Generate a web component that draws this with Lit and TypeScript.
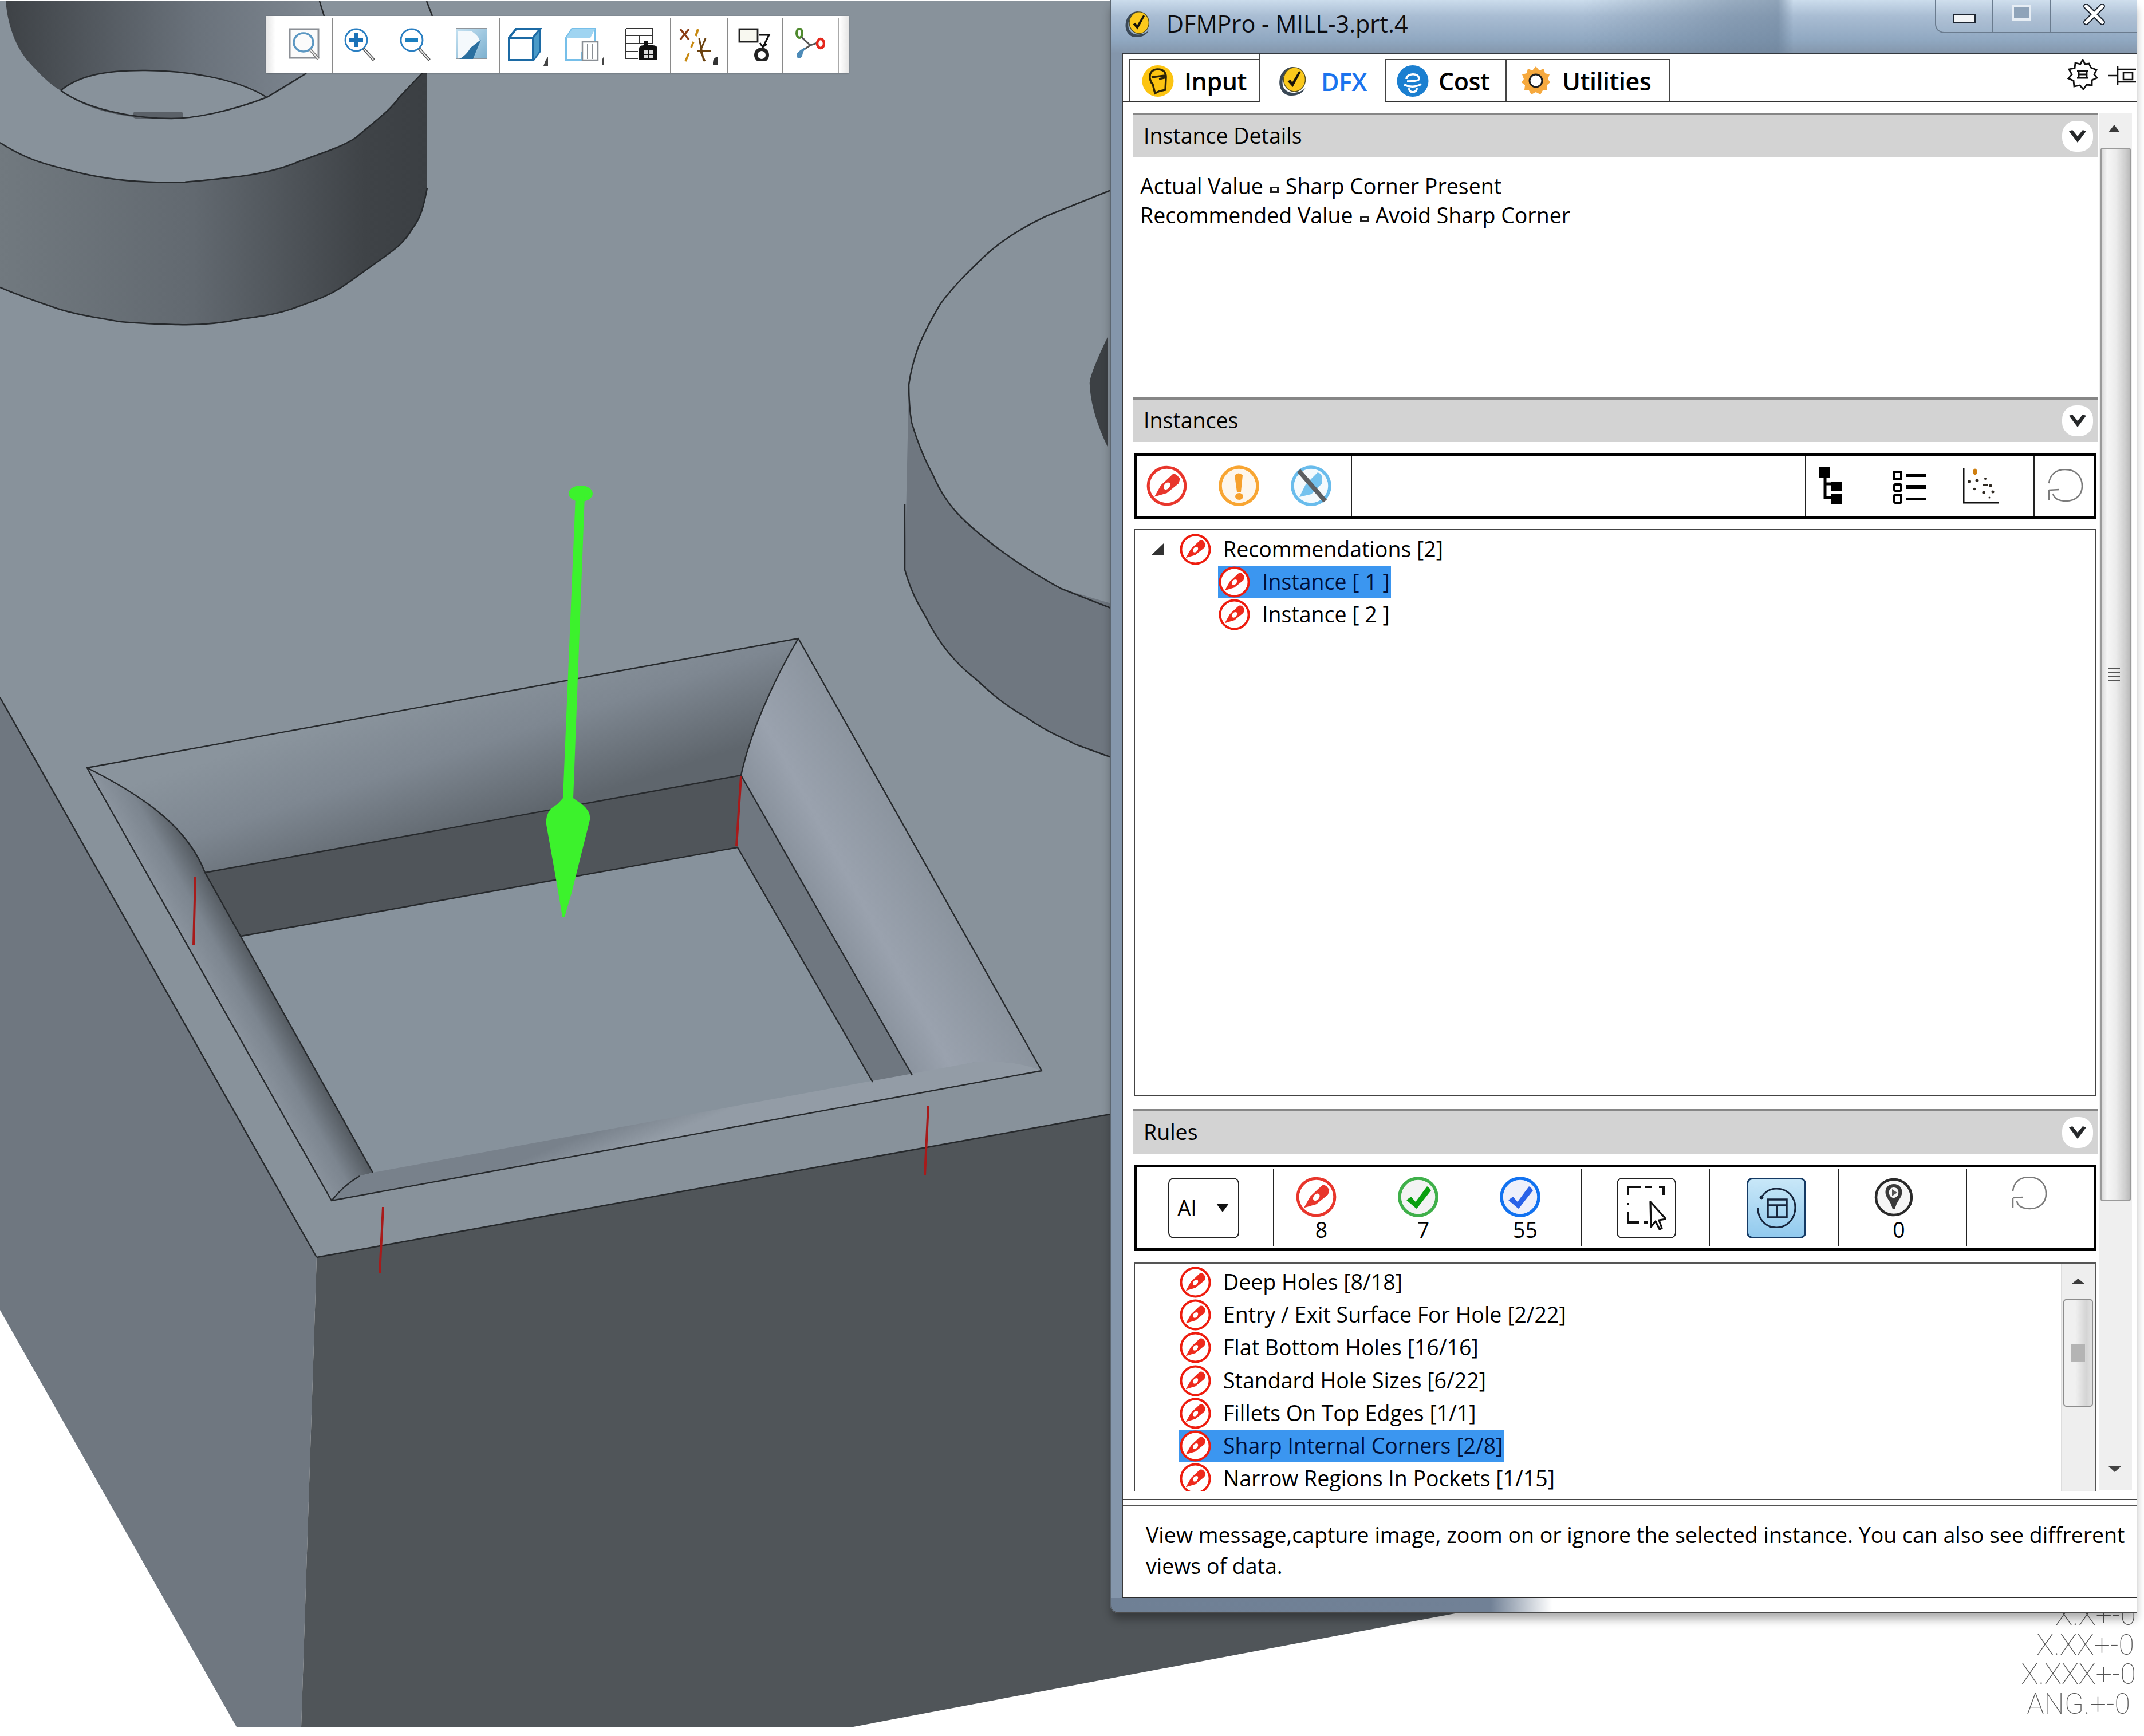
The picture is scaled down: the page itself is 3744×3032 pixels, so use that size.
import { LitElement, html, svg, css } from "lit";
import { customElement } from "lit/decorators.js";

const issue = (w = 57, h = 55) => svg`<svg class="ic" width=${w} height=${h} viewBox="0 0 56 56">
  <circle cx="28" cy="28" r="25.5" fill="#fff" stroke="#ee1c0e" stroke-width="4"/>
  <path fill="#ee2a1c" fill-rule="evenodd" d="M11 43 L20 27 L36 12 Q39 11 42 13 L46 18 Q46 21 44 25 L28 38 Z M24 32 Q27 35 31 31 Q34 27 32 24 Q28 22 25 26 Q23 29 24 32Z"/>
</svg>`;

const ringCheck = (ring: string, fillc: string, chk: string) => svg`<svg class="ic" width="71" height="71" viewBox="0 0 71 71">
  <circle cx="35.5" cy="35.5" r="32.5" fill=${fillc} stroke=${ring} stroke-width="5.5"/>
  <path fill=${chk} d="M15 41 L23 35 L31 44 L51 17 Q56 20 58 24 L33 56 Q31 55 29 53 Z"/>
</svg>`;

const warn = svg`<svg class="ic" width="71" height="71" viewBox="0 0 71 71">
  <circle cx="35.5" cy="35.5" r="32.5" fill="#fdf6ec" stroke="#f8a532" stroke-width="5.5"/>
  <path fill="#f6a02c" d="M28 17 Q35 10 42 17 L39 46 L32 46 Z"/><ellipse cx="36" cy="54" rx="7" ry="6" fill="#f6a02c"/>
</svg>`;

const ignored = svg`<svg class="ic" width="71" height="71" viewBox="0 0 71 71">
  <circle cx="35.5" cy="35.5" r="32.5" fill="#f4fafd" stroke="#69bcec" stroke-width="5.5"/>
  <path fill="#74c2ee" d="M15 55 L26 33 L47 12 Q53 14 55 20 L55 31 L36 50 Z"/>
  <path d="M14 9 L60 62" stroke="#5c5f62" stroke-width="8"/>
</svg>`;

const redBig = svg`<svg class="ic" width="71" height="71" viewBox="0 0 56 56">
  <circle cx="28" cy="28" r="25.5" fill="#fff" stroke="#e8362c" stroke-width="4"/>
  <path fill="#e8362c" fill-rule="evenodd" d="M11 43 L20 27 L36 12 Q39 11 42 13 L46 18 Q46 21 44 25 L28 38 Z M24 32 Q27 35 31 31 Q34 27 32 24 Q28 22 25 26 Q23 29 24 32Z"/>
</svg>`;

const refresh = svg`<svg class="ic" width="60" height="60" viewBox="0 0 60 60" fill="none" stroke="#7b7b7b" stroke-width="2.5">
  <path d="M1 25 C3 8 15 1 29 1 C49 1 59 14 59 30 C59 46 47 56 31 56 C19 56 10 52 8 43"/><path d="M1 37 L19 36 M1 37 L1 54"/>
</svg>`;

const chevron = svg`<svg width="30" height="22" viewBox="0 0 30 22"><path d="M0 2 L6 0 L15 11 L24 0 L30 2 L15 22 Z" fill="#26282a"/></svg>`;

const treeIcon = svg`<svg class="ic" width="39" height="65" viewBox="0 0 39 65">
  <path fill="#000" d="M0 0H18V18H0Z M21 25H39V42H21Z M21 47H39V65H21Z"/><path d="M10 18V53H21 M10 29H21" stroke="#000" stroke-width="5" fill="none"/>
</svg>`;
const listIcon = svg`<svg class="ic" width="58" height="58" viewBox="0 0 58 58">
  <g fill="none" stroke="#000" stroke-width="4"><rect x="2" y="2" width="12" height="12"/><rect x="2" y="24" width="12" height="11" rx="2"/><rect x="2" y="42" width="12" height="14" rx="2"/></g>
  <path fill="#000" d="M22 5H58V11H22Z M23 25H58V32H23Z M22 47H58V52H22Z"/>
</svg>`;
const scatterIcon = svg`<svg class="ic" width="63" height="63" viewBox="0 0 63 63">
  <path d="M1 0V61H63" fill="none" stroke="#111" stroke-width="3"/><ellipse cx="21" cy="7" rx="3.5" ry="5.5" fill="#cf7f10"/>
  <g fill="#2e2820"><circle cx="11" cy="24" r="3"/><circle cx="24" cy="22" r="2.5"/><circle cx="39" cy="19" r="2"/><rect x="35" y="28" width="8" height="4"/><circle cx="48" cy="31" r="2.5"/><circle cx="20" cy="37" r="2.2"/><circle cx="36" cy="43" r="2.6"/><circle cx="52" cy="42" r="2.5"/><circle cx="46" cy="52" r="1.5"/></g>
</svg>`;

const selectBtn = svg`<svg class="ic" width="68" height="78" viewBox="0 0 68 78" fill="none">
  <path d="M24 2H2V16 M2 30V34 M2 46V64H22 M32 2H44 M56 2H64V16 M36 64H30" stroke="#111" stroke-width="4"/><path d="M41 28 L42 72 L50 62 L57 76 L61 74 L56 60 L68 58 Z" fill="#fff" stroke="#111" stroke-width="3.2" stroke-linejoin="round"/>
</svg>`;
const cycleBtn = svg`<svg class="ic" width="68" height="70" viewBox="0 0 68 70" fill="none" stroke="#17253c">
  <path d="M8 16 C16 4 26 1 34 1 C54 1 67 16 67 34 C67 54 52 69 34 69 C14 69 1 52 2 34" stroke-width="3"/><circle cx="8" cy="16" r="3" fill="#17253c"/>
  <rect x="19" y="20" width="33" height="31" stroke-width="3.5"/><path d="M19 30H52 M35 30V51" stroke-width="3.5"/>
</svg>`;
const pinStat = svg`<svg class="ic" width="68" height="70" viewBox="0 0 68 70">
  <circle cx="34" cy="35" r="31" fill="#f6f6f6" stroke="#2a2a2a" stroke-width="4.5"/>
  <path fill="#3a3a3a" fill-rule="evenodd" d="M34 12 C46 12 50 22 48 30 C46 38 39 42 36 56 H32 C29 42 22 38 20 30 C18 22 22 12 34 12Z M34 18 C27 18 25 24 26 29 C27 34 31 36 34 36 C37 36 41 34 42 29 C43 24 41 18 34 18Z"/>
  <path fill="#555" d="M31 21 L40 27 L31 33Z"/>
</svg>`;

const titleLogo = (w: number, h: number) => svg`<svg class="ic" width=${w} height=${h} viewBox="0 0 50 52">
  <path d="M24 51 C8 52 0 38 2 24 C4 8 16 0 28 1 C16 5 7 14 7 28 C7 40 16 46 26 46 C33 46 40 44 47 38 C42 47 33 51 24 51Z" fill="#3a4856"/>
  <ellipse cx="28" cy="23" rx="19" ry="21" fill="#fbc91c" stroke="#5a5220" stroke-width="1.5"/>
  <path d="M16 26 L21 23 L24 28 L36 8 L39 10 L25 36 Z" fill="#181408"/>
</svg>`;

const inputLogo = svg`<svg class="ic" width="56" height="57" viewBox="0 0 56 57">
  <circle cx="28" cy="28.5" r="27.5" fill="#fcc411"/><path fill="none" stroke="#2a2208" stroke-width="3.4" d="M14 24 C13 12 20 8 28 8 C38 8 43 14 42 24 L41 44 L31 46 L23 50 L19 34 C16 32 15 28 14 24 M17 22 L39 19 L39 23 L30 25"/>
</svg>`;
const costLogo = svg`<svg class="ic" width="56" height="57" viewBox="0 0 56 57">
  <circle cx="28" cy="28.5" r="27.5" fill="#1b7fd0"/><path d="M17 25 C17 15 39 13 39 25 C39 28 30 29 18 29 M13 35 Q28 42 43 34 M22 41 C20 50 36 50 35 41" fill="none" stroke="#fff" stroke-width="3.6"/>
</svg>`;
const gearLogo = svg`<svg class="ic" width="50" height="50" viewBox="0 0 50 50">
  <path fill="#f6a93e" d="M25 0 L31 7 L39 4 L41 12 L49 14 L46 22 L50 28 L44 33 L45 41 L37 42 L33 49 L25 45 L17 49 L13 42 L5 41 L6 33 L0 28 L4 22 L1 14 L9 12 L11 4 L19 7 Z"/>
  <circle cx="25" cy="25" r="11" fill="#fff" stroke="#1d1d1d" stroke-width="3"/>
</svg>`;
const gearOutline = svg`<svg class="ic" width="53" height="54" viewBox="0 0 53 54" fill="none" stroke="#111" stroke-width="2.8">
  <path d="M27 1 L31 9 L38 8 L41 15 L51 19 L47 27 L52 33 L43 37 L43 46 L34 45 L28 53 L22 46 L12 48 L11 38 L2 34 L8 27 L3 18 L13 16 L14 7 L23 9 Z"/>
  <path d="M17 21 H37 M17 33 H37 M20 21 V33 M34 21 V33 M20 27 H34"/>
</svg>`;
const dockPin = svg`<svg class="ic" width="49" height="34" viewBox="0 0 49 34" fill="none" stroke="#111" stroke-width="2.6">
  <path d="M0 17 H15 M17 1 V33 M17 6 H49 M17 28 H49 M27 12 H43 V24 H27 Z"/>
</svg>`;

const topIcons = [
  svg`<svg width="56" height="56" viewBox="0 0 56 56" fill="none"><rect x="2" y="2" width="50" height="50" stroke="#8c9096" stroke-width="3" fill="#fbfbfb"/><ellipse cx="26" cy="25" rx="17" ry="16" stroke="#5b97c2" stroke-width="3.6"/><path d="M38 38 L52 54" stroke="#777" stroke-width="5"/><path d="M38 38 L52 54" stroke="#eee" stroke-width="2"/></svg>`,
  svg`<svg width="56" height="58" viewBox="0 0 56 58" fill="none"><circle cx="21" cy="21" r="19" stroke="#2a7fc2" stroke-width="2.8"/><path d="M21 9V33M9 21H33" stroke="#1b72b8" stroke-width="6.5"/><path d="M34 36 L52 56" stroke="#555" stroke-width="5"/><path d="M35 37 L51 55" stroke="#eee" stroke-width="2"/></svg>`,
  svg`<svg width="56" height="58" viewBox="0 0 56 58" fill="none"><circle cx="21" cy="21" r="19" stroke="#2a7fc2" stroke-width="2.8"/><path d="M10 21H32" stroke="#1b7fbf" stroke-width="7"/><path d="M34 36 L52 56" stroke="#555" stroke-width="5"/><path d="M35 37 L51 55" stroke="#eee" stroke-width="2"/></svg>`,
  svg`<svg width="55" height="54" viewBox="0 0 55 54"><defs><linearGradient id="g4" x2="1" y2="1"><stop offset="0" stop-color="#c6e2f2"/><stop offset="1" stop-color="#7cb0cf"/></linearGradient></defs><rect width="55" height="54" fill="url(#g4)" stroke="#8f959b" stroke-width="2"/><path d="M4 6H28 Q40 14 42 22 L24 52H4Z" fill="#f4f9fc"/><path d="M6 54 Q18 48 26 34 L44 20 L30 54Z" fill="#2a6f9f"/></svg>`,
  svg`<svg width="70" height="66" viewBox="0 0 70 66" fill="none" stroke="#1c6aa4" stroke-width="4"><rect x="2" y="17" width="42" height="39" fill="#fff"/><path d="M2 17 L14 2 H56 L44 17 M56 2 V40 L44 56" /><path d="M46 17 L55 5 V40 L46 53Z" fill="#4a9ac8" stroke="none"/><path d="M66 56 L70 50 V66 H62Z" fill="#444" stroke="none"/></svg>`,
  svg`<svg width="70" height="66" viewBox="0 0 70 66" fill="none"><path d="M2 17 L12 2 H52 V44 H30 V56 H2 Z" fill="#fff" stroke="#76bfe9" stroke-width="4"/><path d="M2 17 H44 L52 2 H12Z" fill="#9fd4f1"/><rect x="30" y="24" width="27" height="32" fill="#fff" stroke="#8a8f95" stroke-width="2.5"/><path d="M39 28V54 M47 28V54" stroke="#8a8f95" stroke-width="2"/><path d="M65 60 Q64 52 68 50 V64 H64Z" fill="#444"/></svg>`,
  svg`<svg width="58" height="58" viewBox="0 0 58 58" fill="none" stroke="#333" stroke-width="2"><path d="M1 1H48 M1 1V53H22 M1 13H48 M1 27H48 M1 41H22 M48 1V27 M24 13V27"/><path d="M24 36 Q24 30 32 30 V22 H40 V30 H48 Q56 30 56 36 V56 H24Z" fill="#111" stroke="none"/><rect x="31" y="38" width="18" height="16" fill="#ddd" stroke="#111"/><path d="M40 38V54M31 46H49" stroke="#111"/></svg>`,
  svg`<svg width="70" height="66" viewBox="0 0 70 66" fill="none"><path d="M3 2 L18 20 M18 2 L3 20" stroke="#8a3b12" stroke-width="3.5"/><path d="M34 2 L30 14" stroke="#c88a12" stroke-width="4"/><path d="M26 24 L22 34 M18 44 L12 58" stroke="#c88a12" stroke-width="3.5"/><path d="M47 18 L38 40 L46 58 M36 18 L44 58 M32 40 H56" stroke="#6b4210" stroke-width="3"/><path d="M60 60 Q60 52 68 50 V64 H60Z" fill="#333"/></svg>`,
  svg`<svg width="58" height="58" viewBox="0 0 58 58" fill="none"><rect x="2" y="2" width="32" height="22" fill="#f8f8f0" stroke="#222" stroke-width="2.8"/><path d="M36 12 H54 L44 32 M38 26 L43 33 L50 28" stroke="#111" stroke-width="3"/><circle cx="41" cy="47" r="10" stroke="#222" stroke-width="6"/></svg>`,
  svg`<svg width="52" height="54" viewBox="0 0 52 54" fill="none"><ellipse cx="7" cy="9" rx="5" ry="8" stroke="#4f8a2e" stroke-width="4"/><path d="M11 16 L26 30 L38 26 M26 30 L14 38" stroke="#555" stroke-width="3"/><ellipse cx="44" cy="27" rx="6" ry="8" stroke="#e5281c" stroke-width="4.5" fill="#fff"/><path d="M16 34 C10 38 2 42 2 48 C2 54 10 55 12 48 C13 42 15 38 18 36Z" fill="#4d8bb8"/></svg>`,
];
const topWidths = [96.5, 97, 98, 97, 100, 100, 98, 100, 96, 99];

const model = svg`<svg class="model" width="2600" height="3016" viewBox="0 0 2600 3016">
  <defs>
    <linearGradient id="holeG" x1="0" x2="1" y1="0" y2="0"><stop offset="0" stop-color="#3e4246"/><stop offset=".6" stop-color="#6a727b"/><stop offset="1" stop-color="#7e8791"/></linearGradient>
    <linearGradient id="bossG" gradientUnits="userSpaceOnUse" x1="0" x2="750" y1="0" y2="0"><stop offset="0" stop-color="#71797f"/><stop offset=".45" stop-color="#626970"/><stop offset=".85" stop-color="#3f4347"/><stop offset="1" stop-color="#3b3f43"/></linearGradient>
    <linearGradient id="backG" gradientUnits="userSpaceOnUse" x1="700" y1="1220" x2="780" y2="1470"><stop offset="0" stop-color="#8a949d"/><stop offset=".45" stop-color="#7e8791"/><stop offset="1" stop-color="#5f666d"/></linearGradient>
    <linearGradient id="rightG" gradientUnits="userSpaceOnUse" x1="1400" y1="1640" x2="1640" y2="1510"><stop offset="0" stop-color="#7f8892"/><stop offset=".45" stop-color="#9aa2ae"/><stop offset="1" stop-color="#89929c"/></linearGradient>
    <linearGradient id="leftG" gradientUnits="userSpaceOnUse" x1="365" y1="1719" x2="450" y2="1672"><stop offset="0" stop-color="#8a939d"/><stop offset=".45" stop-color="#7c858f"/><stop offset="1" stop-color="#4f555b"/></linearGradient>
    <linearGradient id="chamG" gradientUnits="userSpaceOnUse" x1="1100" y1="1950" x2="1120" y2="2000"><stop offset="0" stop-color="#78818b"/><stop offset="1" stop-color="#939ca6"/></linearGradient>
  </defs>
  <path d="M0 2H2000V1935L553 2196L0 1218Z" fill="#88929b"/>
  <path d="M0 1218L553 2196L526 3016H413L0 2288Z" fill="#6f7780"/>
  <path d="M553 2196L2000 1935V2818H2541L1490 3016H526Z" fill="#505559"/>
  <path d="M553 2196L2000 1935M0 1218L553 2196" stroke="#26292c" stroke-width="2.5" fill="none"/>
  <!-- top-left boss -->
  <path d="M0 249 C40 275 70 285 124 298 C190 316 260 320 323 318 C410 310 470 305 522 282 C570 265 600 255 622 240 C650 215 680 195 697 170 L738 127 H746 V328 C740 360 735 380 721 398 C705 425 690 435 672 448 L609 493 C580 515 550 525 522 535 C490 548 460 552 423 557 C380 566 345 568 311 567 C280 566 240 565 211 562 C170 555 135 550 100 539 C60 525 30 515 0 502Z" fill="url(#bossG)"/>
  <path d="M10 2 C14 50 30 85 50 108 C70 130 90 150 106 158 C140 185 190 200 240 205 C290 210 360 200 466 170 C500 155 525 135 535 128 C552 100 562 70 566 28 L558 2Z" fill="url(#holeG)"/>
  <path d="M106 158 C140 130 190 123 249 123 C320 123 410 135 466 170 C400 195 340 207 299 207 C230 207 150 190 106 158Z" fill="#88929b"/>
  <rect x="232" y="195" width="88" height="12" rx="5" fill="#5b6168"/>
  <g fill="none" stroke="#26292c" stroke-width="2.5">
    <path d="M106 158 C150 190 230 207 299 207 C340 207 400 195 466 170 M106 158 C140 130 190 123 249 123 C320 123 410 135 466 170 L535 128"/>
    <path d="M0 249 C40 275 70 285 124 298 C190 316 260 320 323 318 C410 310 470 305 522 282 C570 265 600 255 622 240 C650 215 680 195 697 170 L738 127"/>
    <path d="M746 328 C740 360 735 380 721 398 C705 425 690 435 672 448 L609 493 C580 515 550 525 522 535 C490 548 460 552 423 557 C380 566 345 568 311 567 C280 566 240 565 211 562 C170 555 135 550 100 539 C60 525 30 515 0 502"/>
    <path d="M558 2L566 28M745 2L755 28"/>
  </g>
  <!-- right boss -->
  <path d="M1587 672 L1580 995 C1590 1030 1600 1050 1617 1078 C1640 1125 1670 1160 1704 1186 C1735 1215 1760 1235 1791 1252 C1830 1280 1860 1290 1878 1300 L1960 1330 V1060 L1853 1028 C1810 1005 1780 985 1754 966 C1725 945 1700 925 1679 904 C1655 880 1640 855 1629 829 C1610 795 1600 765 1592 738Z" fill="#6f7780"/>
  <path d="M1960 324 L1828 377 C1790 395 1755 415 1723 444 C1690 475 1665 500 1642 531 C1625 560 1612 585 1604 605 C1595 630 1590 650 1587 672 C1587 695 1588 715 1592 738 C1600 765 1610 795 1629 829 C1640 855 1655 880 1679 904 C1700 925 1725 945 1754 966 C1780 985 1810 1005 1853 1028 L1960 1070" fill="none" stroke="#26292c" stroke-width="2.5"/>
  <path d="M1580 880 V995 C1590 1030 1600 1050 1617 1078 C1640 1125 1670 1160 1704 1186 C1735 1215 1760 1235 1791 1252 C1830 1280 1860 1290 1878 1300 L1960 1330" fill="none" stroke="#26292c" stroke-width="2.5"/>
  <path d="M1934 589 Q1900 660 1903 672 Q1905 720 1934 780Z" fill="#3c4044"/>
  <!-- pocket -->
  <path d="M152 1341L1394 1115C1350 1190 1310 1280 1294 1354L358 1524C330 1450 260 1395 152 1341Z" fill="url(#backG)"/>
  <path d="M358 1524L1294 1354L1288 1480L421 1635Z" fill="#50555a"/>
  <path d="M421 1635L1288 1480L1524 1890L651 2048Z" fill="#87929c"/>
  <path d="M1294 1354L1288 1480L1524 1890L1593 1878Z" fill="#6f7780"/>
  <path d="M1394 1115L1819 1870Q1770 1850 1702 1855L1593 1878L1294 1354C1310 1280 1350 1190 1394 1115Z" fill="url(#rightG)"/>
  <path d="M152 1341C260 1395 330 1450 358 1524L651 2048L628 2054Q600 2070 579 2097Z" fill="url(#leftG)"/>
  <path d="M651 2048L1702 1855Q1770 1850 1819 1870L579 2097Q600 2070 628 2054Z" fill="url(#chamG)"/>
  <g fill="none" stroke="#26292c" stroke-width="2.4">
    <path d="M152 1341L1394 1115L1819 1870L579 2097Z"/>
    <path d="M358 1524L1294 1354L1593 1878M421 1635L1288 1480L1524 1890M358 1524L651 2048"/>
    <path d="M1394 1115C1350 1190 1310 1280 1294 1354M152 1341C260 1395 330 1450 358 1524"/>
    <path d="M579 2097Q600 2070 628 2054"/>
  </g>
  <g fill="none" stroke="#a81a1a" stroke-width="4">
    <path d="M341 1532L338 1650M1294 1356L1286 1478M1621 1931L1615 2052M669 2108L663 2224"/>
  </g>
  <ellipse cx="1014" cy="862" rx="21" ry="14" fill="#3cf22c"/>
  <path fill="#3cf22c" d="M1005 866L1021 866L1001 1394L1018 1406Q1032 1418 1030 1432L998 1560L986 1601L982 1601L970 1530L954 1440Q952 1415 973 1405L983 1394Z"/>
</svg>`;

const tree = [
  { label: "Instance [ 1 ]", sel: true },
  { label: "Instance [ 2 ]", sel: false },
];
const rules = [
  "Deep Holes [8/18]",
  "Entry / Exit Surface For Hole [2/22]",
  "Flat Bottom Holes [16/16]",
  "Standard Hole Sizes [6/22]",
  "Fillets On Top Edges [1/1]",
  "Sharp Internal Corners [2/8]",
  "Narrow Regions In Pockets [1/15]",
];

@customElement("app-root")
export class AppRoot extends LitElement {
  static styles = css`
    :host { display: block; position: relative; width: 3744px; height: 3032px; background: #fff; overflow: hidden;
      font-family: "Open Sans", "Noto Sans", sans-serif; font-size: 37.5px; color: #000; }
    .model { position: absolute; left: 0; top: 0; }
    .ic { display: block; flex: none; }
    .topbar { position: absolute; left: 465px; top: 28px; height: 99px; width: 1017px; box-sizing: border-box; display: flex; padding: 4px 0 0 18px;
      background: linear-gradient(90deg, #e6e6e6 0, #fff 1.6%, #fff 98.4%, #e6e6e6 100%); box-shadow: 0 1px 3px rgba(0,0,0,.3); }
    .topcell { box-sizing: border-box; border-left: 1.5px solid #8a8a8a; display: flex; justify-content: center; padding-top: 17px; }
    .topcell:last-child { border-right: 1.5px solid #aaa; }
    .notes { position: absolute; right: 14px; top: 2796px; text-align: right; font-family: Roboto, "Liberation Sans", sans-serif; font-weight: 100; font-size: 50px; line-height: 51.5px; color: #555; }
    .notes .b { padding-right: 3px; } .notes .d { padding-right: 10px; }
    .window { position: absolute; left: 1938px; top: 0; width: 1794px; height: 2818px; box-sizing: border-box; display: flex; flex-direction: column; padding-left: 19px;
      background:
        linear-gradient(90deg, rgba(110,130,155,0) 0, rgba(110,130,155,0) 46%, rgba(104,126,150,.5) 60%, rgba(104,126,150,.6) 65%, rgba(110,130,155,0) 66.5%),
        linear-gradient(180deg, #cbdcec 0, #a9bdd3 28px, #90a8c1 70px, #8496ab 93px);
      border-left: 2px solid #5c6670; border-bottom-left-radius: 16px; box-shadow: 0 12px 16px -2px rgba(0,0,0,.33); }
    .title { height: 93px; flex: none; display: flex; align-items: flex-start; padding-left: 5px; box-sizing: border-box; }
    .title .logo { margin-top: 17px; }
    .title .t { margin-left: 28px; margin-top: 14px; font-size: 41.4px; line-height: 54px; color: #0c0c10; }
    .winbtns { margin-left: auto; width: 353px; height: 58px; box-sizing: border-box; display: flex; border: 2px solid #6a7b8e; border-top: 0; border-right: 0; border-bottom-left-radius: 16px; background: rgba(255,255,255,.08); }
    .winbtns > div { display: flex; justify-content: center; position: relative; }
    .winbtns .min { width: 98px; border-right: 2px solid #6a7b8e; } .winbtns .max { width: 98px; border-right: 2px solid #6a7b8e; } .winbtns .cls { flex: 1; }
    .minb { width: 41px; height: 17px; box-sizing: border-box; background: #f2f4f6; border: 3px solid #1d2530; margin-top: 24px; }
    .maxb { width: 34px; height: 28px; box-sizing: border-box; background: #8ea3b9; border: 4px solid #e6edf4; margin-top: 8px; }
    .client { flex: 1; min-height: 0; background: #fff; border-top: 2px solid #33383e; border-bottom: 2px solid #2c2c2c; border-left: 2px solid #3a3a3a; display: flex; flex-direction: column; }
    .tabs { height: 84px; flex: none; box-sizing: border-box; display: flex; align-items: flex-end; padding-left: 10px; position: relative; border-bottom: 2px solid #333; }
    .tab { height: 74px; box-sizing: border-box; display: flex; align-items: center; border: 2px solid #444; border-bottom: 0; font-size: 43px; font-weight: 600; letter-spacing: -0.5px; }
    .tab.input { width: 228px; padding-left: 21px; gap: 18px; border-right: 0; }
    .tab.dfx { width: 220px; height: 84px; margin-bottom: -2px; padding-left: 31px; padding-top: 10px; gap: 24px; border: 0; border-left: 2px solid #444; color: #1a74ee; background: #fff; }
    .tab.cost { width: 210px; padding-left: 18px; gap: 17px; border-right: 0; }
    .tab.util { width: 288px; padding-left: 26px; gap: 21px; }
    .tabtools { margin-left: auto; display: flex; align-items: flex-start; gap: 18px; align-self: flex-start; padding-top: 8px; padding-right: 2px; }
    .tabtools .ic:last-child { margin-top: 12px; }
    .panel { flex: 1; min-height: 0; display: grid; grid-template-columns: 1684px 58px 1fr; column-gap: 2px; padding-left: 18px; padding-top: 18px; box-sizing: border-box; }
    .col { display: flex; flex-direction: column; min-width: 0; }
    .hdr { height: 78px; flex: none; box-sizing: border-box; background: #d3d3d3; border-top: 4px solid #868686; display: flex; align-items: center; padding: 0 8px 0 18px; justify-content: space-between; }
    .hdr > span { margin-top: -4px; }
    .chev { width: 54px; height: 54px; border-radius: 24px; background: #fff; display: flex; align-items: center; justify-content: center; }
    .body { height: 419px; flex: none; box-sizing: border-box; padding: 25px 0 0 12px; line-height: 50.5px; }
    .sq { display: inline-block; width: 15px; height: 11px; border: 3px solid #222; box-sizing: border-box; margin: 0 12px; vertical-align: 2px; }
    .tb { margin: 0 2px 0 1px; flex: none; box-sizing: border-box; border: 5px solid #000; display: flex; align-items: center; }
    .tb.one { height: 115px; margin-top: 19px; }
    .tb.two { height: 151px; margin-top: 19px; }
    .grp { box-sizing: border-box; display: flex; align-items: center; align-self: center; border-right: 2px solid #222; }
    .one .grp { height: 105px; }
    .two .grp { height: 135px; }
    .g1 { width: 376px; padding-left: 17px; gap: 55px; }
    .g2 { flex: 1; }
    .g3 { width: 399px; padding-left: 23px; }
    .g3 .ic:nth-child(2) { margin-left: 90px; margin-top: 4px; } .g3 .ic:nth-child(3) { margin-left: 64px; }
    .g4 { flex: none; width: 103px; padding-left: 24px; border-right: 0 !important; }
    .r1 { width: 240px; padding-left: 55px; }
    .r2 { width: 537px; padding-left: 38px; gap: 107px; }
    .r3 { width: 224px; padding-left: 61px; }
    .r4 { width: 225px; padding-left: 64px; }
    .r5 { width: 224px; padding-left: 62px; }
    .r6 { flex: 1; padding-left: 79px; align-items: flex-start !important; padding-top: 13px; border-right: 0 !important; }
    .dd { width: 124px; height: 106px; box-sizing: border-box; border: 2px solid #222; border-radius: 10px; display: flex; align-items: center; padding-left: 14px; justify-content: space-between; padding-right: 16px; }
    .dd i { width: 0; height: 0; border-left: 11px solid transparent; border-right: 11px solid transparent; border-top: 15px solid #111; }
    .stat { display: flex; flex-direction: column; align-items: center; padding-top: 6px; }
    .stat span { line-height: 44px; padding-left: 18px; }
    .btn { width: 104px; height: 106px; box-sizing: border-box; border: 2.5px solid #222; border-radius: 10px; display: flex; align-items: center; justify-content: center; }
    .btn.on { background: linear-gradient(180deg, #c8e7f8, #92caee); border: 3px solid #153a64; }
    .treebox { margin: 18px 2px 0 1px; height: 991px; flex: none; box-sizing: border-box; border: 2px solid #444; padding-top: 5px; }
    .row { height: 57.2px; display: flex; align-items: center; box-sizing: border-box; }
    .row.l0 { padding-left: 28px; }
    .row.l0 .tri { width: 0; height: 0; border-bottom: 21px solid #333; border-left: 22px solid transparent; margin-right: 27px; }
    .row.l1 { padding-left: 145px; }
    .cell { display: flex; align-items: center; gap: 20px; height: 57px; padding-right: 2px; }
    .cell > span { margin-top: -2px; }
    .cell.sel { background: #3b96f0; color: #00103a; }
    .hdr.rules { margin-top: 22px; }
    .listwrap { margin: 20px 2px 0 1px; height: 399px; flex: none; box-sizing: border-box; border-top: 2px solid #555; border-left: 2px solid #444; border-right: 2px solid #555; display: flex; }
    .rows { flex: 1; overflow: hidden; padding: 4px 0 0 77px; }
    .lsb { width: 60px; flex: none; background: #eee; box-sizing: border-box; padding-top: 62px; position: relative; border-left: 1px solid #ddd; }
    .lsb .th { margin: 0 4px 0 3px; height: 188px; box-sizing: border-box; border: 2px solid #8d8d8d; border-radius: 5px; background: linear-gradient(90deg, #f0f0f0 0, #f0f0f0 40%, #d4d4d4 80%, #e2e2e2 100%); display: flex; align-items: center; justify-content: center; }
    .lsb .th i { width: 24px; height: 30px; background: #b4b4b4; }
    .upa { position: absolute; top: 26px; left: 18px; width: 0; height: 0; border-left: 11px solid transparent; border-right: 11px solid transparent; border-bottom: 9px solid #3a3a3a; }
    .sb { position: relative; height: 2406px; background: #efefef; }
    .sb .th { position: absolute; left: 3px; right: 2px; top: 61px; height: 1840px; box-sizing: border-box; border: 2px solid #9a9a9a; border-bottom-width: 3px; border-radius: 4px; background: linear-gradient(90deg, #d8d8d8 0, #f6f6f6 20%, #ececec 50%, #cdcdcd 85%, #bbb 100%); display: flex; align-items: center; justify-content: center; }
    .sb .grip { width: 20px; height: 24px; background: repeating-linear-gradient(180deg, #555 0 3px, transparent 3px 7px); margin-right: 6px; }
    .sb .up { position: absolute; left: 17px; top: 21px; border-left: 10px solid transparent; border-right: 10px solid transparent; border-bottom: 13px solid #3a3a3a; width: 0; height: 0; }
    .sb .dn { position: absolute; left: 17px; top: 2364px; border-left: 11px solid transparent; border-right: 11px solid transparent; border-top: 10px solid #444; width: 0; height: 0; }
    .status { flex: none; height: 171px; box-sizing: border-box; border-top: 2px solid #444; padding-top: 9px; }
    .status p { margin: 0; border-top: 2px solid #555; padding: 23px 0 0 40px; line-height: 54px; }
    .strip { flex: none; height: 25px; margin-left: -19px; border-bottom-left-radius: 14px; border-bottom: 2px solid #4a4a4a; background: linear-gradient(90deg, #6f8095 0, #718196 37%, #ffffff 43%); }
  `;

  render() {
    return html`
      ${model}
      <div class="topbar">
        ${topIcons.map((ic, i) => html`<div class="topcell" style="width:${topWidths[i]}px">${ic}</div>`)}
      </div>
      <div class="notes">
        <div>X.X+-0</div><div class="b">X.XX+-0</div><div>X.XXX+-0</div><div class="d">ANG.+-0</div>
      </div>
      <div class="window">
        <div class="title">
          <div class="logo">${titleLogo(45, 51)}</div>
          <div class="t">DFMPro - MILL-3.prt.4</div>
          <div class="winbtns">
            <div class="min"><div class="minb"></div></div>
            <div class="max"><div class="maxb"></div></div>
            <div class="cls"><svg width="38" height="36" viewBox="0 0 38 36" style="margin-top:7px"><path d="M5 4 L33 32 M33 4 L5 32" stroke="#1d2530" stroke-width="10" stroke-linecap="round" fill="none"/><path d="M5 4 L33 32 M33 4 L5 32" stroke="#fff" stroke-width="6" stroke-linecap="round"/></svg></div>
          </div>
        </div>
        <div class="client">
          <div class="tabs">
            <div class="tab input">${inputLogo}<span>Input</span></div>
            <div class="tab dfx">${titleLogo(51, 52)}<span>DFX</span></div>
            <div class="tab cost">${costLogo}<span>Cost</span></div>
            <div class="tab util">${gearLogo}<span>Utilities</span></div>
            <div class="tabtools">${gearOutline}${dockPin}</div>
          </div>
          <div class="panel">
            <div class="col">
              <div class="hdr"><span>Instance Details</span><div class="chev">${chevron}</div></div>
              <div class="body">
                <div>Actual Value<span class="sq"></span>Sharp Corner Present</div>
                <div>Recommended Value<span class="sq"></span>Avoid Sharp Corner</div>
              </div>
              <div class="hdr"><span>Instances</span><div class="chev">${chevron}</div></div>
              <div class="tb one">
                <div class="grp g1">${redBig}${warn}${ignored}</div>
                <div class="grp g2"></div>
                <div class="grp g3">${treeIcon}${listIcon}${scatterIcon}</div>
                <div class="grp g4">${refresh}</div>
              </div>
              <div class="treebox">
                <div class="row l0"><div class="tri"></div><div class="cell">${issue()}<span>Recommendations [2]</span></div></div>
                ${tree.map((t) => html`<div class="row l1"><div class="cell ${t.sel ? "sel" : ""}">${issue()}<span>${t.label}</span></div></div>`)}
              </div>
              <div class="hdr rules"><span>Rules</span><div class="chev">${chevron}</div></div>
              <div class="tb two">
                <div class="grp r1"><div class="dd"><span>Al</span><i></i></div></div>
                <div class="grp r2">
                  <div class="stat">${redBig}<span>8</span></div>
                  <div class="stat">${ringCheck("#3fb04a", "#f3f3f3", "#0aa010")}<span>7</span></div>
                  <div class="stat">${ringCheck("#1272f0", "#eef0fb", "#2a62e8")}<span>55</span></div>
                </div>
                <div class="grp r3"><div class="btn">${selectBtn}</div></div>
                <div class="grp r4"><div class="btn on">${cycleBtn}</div></div>
                <div class="grp r5"><div class="stat">${pinStat}<span>0</span></div></div>
                <div class="grp r6">${refresh}</div>
              </div>
              <div class="listwrap">
                <div class="rows">
                  ${rules.map((r, i) => html`<div class="row"><div class="cell ${i === 5 ? "sel" : ""}">${issue()}<span>${r}</span></div></div>`)}
                </div>
                <div class="lsb"><div class="upa"></div><div class="th"><i></i></div></div>
              </div>
            </div>
            <div class="sb"><div class="up"></div><div class="th"><div class="grip"></div></div><div class="dn"></div></div>
            <div></div>
          </div>
          <div class="status">
            <p>View message,capture image, zoom on or ignore the selected instance. You can also see diffrerent<br>views of data.</p>
          </div>
        </div>
        <div class="strip"></div>
      </div>
    `;
  }
}
